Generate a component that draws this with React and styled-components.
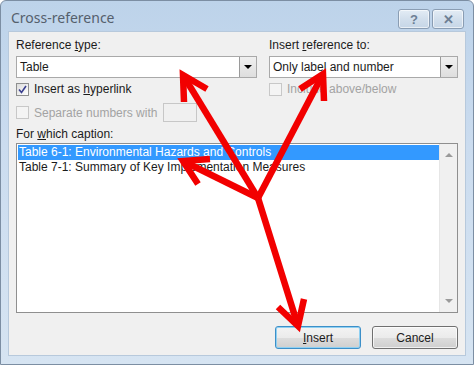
import React from 'react';
import styled, { createGlobalStyle } from 'styled-components';

const Global = createGlobalStyle`
    body { margin: 0; background: #ffffff; }
`

const Frame = styled.div`
    width: 474px; height: 365px;
    box-sizing: border-box;
    position: relative;
    display: flex;
    flex-direction: column;

    background: linear-gradient(180deg, #bdd3ea 0%, #cbdcef 40%, #d6e4f2 100%);
    border: 1px solid #7c8ea3;
    border-radius: 6px 6px 0 0;
    font-family: "Liberation Sans", Arial, sans-serif;
    font-size: 12px;
    color: #1b1b1b;
`

const TitleBar = styled.div`
    height: 30px;
    display: flex;
    align-items: center;
    justify-content: space-between;
    padding: 0 9px 0 10px;
`

const Title = styled.div`
    font-family: "Noto Sans", "Liberation Sans", sans-serif;
    font-size: 14px;
    color: #55606d;
    margin-top: 2px;
`

const TitleButtons = styled.div`
    display: flex;
    gap: 2px;
    align-self: flex-start;
    margin-top: 8px;
`

const CaptionButton = styled.div`
    width: 32px; height: 20px;
    box-sizing: border-box;
    display: flex;
    align-items: center;
    justify-content: center;
    border: 1px solid #8a9db3;
    border-radius: 3px;
    background: linear-gradient(180deg, #e3ecf5 0%, #d2dfec 50%, #c6d6e7 100%);
    box-shadow: inset 0 0 0 1px rgba(255,255,255,0.6);
    color: #6d7f94;
    font-weight: bold;
    font-size: 13px;
`

const Client = styled.div`
    flex: 1;
    margin: 0 7px 8px;
    padding: 6px 7px 6px 7px;
    background: #f0f0f0;
    border: 1px solid #b7c9dc;
    display: flex;
    flex-direction: column;
`

const TopSection = styled.div`
    display: flex;
    gap: 12px;
`

const Column = styled.div`
    width: ${(p) => p.width}px;
    display: flex;
    flex-direction: column;
`

const Label = styled.div`
    line-height: 14px;
    height: 14px;
    margin-top: ${(p) => p.mt || 0}px;
`

const Combo = styled.div`
    margin-top: 4px;
    height: 22px;
    box-sizing: border-box;
    display: flex;
    align-items: center;
    background: #ffffff;
    border: 1px solid #a9a9a9;
    padding-left: 1px;
`

const ComboText = styled.div`
    flex: 1;
    padding-left: 2px;
    line-height: 14px;
`

const ComboButton = styled.div`
    width: 17px; height: 20px;
    box-sizing: border-box;
    display: flex;
    align-items: center;
    justify-content: center;
    background: linear-gradient(180deg, #f0f0f0 0%, #dedede 100%);
    border-left: 1px solid #9a9a9a;
`

const DownTri = styled.div`
    width: 0; height: 0;
    border-left: 4px solid transparent;
    border-right: 4px solid transparent;
    border-top: 4px solid #000000;
`

const CheckRow = styled.div`
    display: flex;
    align-items: center;
    gap: 5px;
    margin-top: ${(p) => p.mt}px;
    height: ${(p) => p.h}px;
    color: ${(p) => (p.disabled ? '#a3a3a3' : '#1b1b1b')};
`

const Box = styled.div`
    width: 13px; height: 13px;
    box-sizing: border-box;
    border: 1px solid ${(p) => (p.disabled ? '#c8c8c8' : '#8e8f8f')};
    background: ${(p) => (p.disabled ? '#f4f4f4' : 'linear-gradient(135deg, #dcdcdc, #ffffff)')};
    display: flex;
    align-items: center;
    justify-content: center;
`

const SmallInput = styled.div`
    width: 34px; height: 19px;
    box-sizing: border-box;
    margin-left: 1px;
    border: 1px solid #c7c7c7;
    background: #f0f0f0;
`

const ListBox = styled.div`
    margin-top: 2px;
    height: 170px;
    box-sizing: border-box;
    border: 1px solid #8f8f8f;
    background: #ffffff;
    display: flex;
`

const Items = styled.div`
    flex: 1;
    padding: 1px 0 0 1px;
`

const Item = styled.div`
    height: 15px;
    line-height: 15px;
    padding-left: 1px;
    background: ${(p) => (p.selected ? '#3399ff' : 'transparent')};
    color: ${(p) => (p.selected ? '#ffffff' : '#1b1b1b')};
`

const ScrollBar = styled.div`
    width: 17px;
    background: #f0f0f0;
    border-left: 1px solid #e6e6e6;
    display: flex;
    flex-direction: column;
    justify-content: space-between;
    align-items: center;
    padding: 9px 0 9px;
`

const Tri = styled.div`
    width: 0; height: 0;
    border-left: 4px solid transparent;
    border-right: 4px solid transparent;
    ${(p) => (p.up ? 'border-bottom: 4px solid #9a9a9a;' : 'border-top: 4px solid #9a9a9a;')}
`

const ButtonRow = styled.div`
    margin-top: 13px;
    display: flex;
    justify-content: flex-end;
    gap: 11px;
`

const Button = styled.div`
    width: 86px; height: 23px;
    box-sizing: border-box;
    display: flex;
    align-items: center;
    justify-content: center;
    border: 1px solid ${(p) => (p.focused ? '#3c8fc8' : '#707070')};
    border-radius: 3px;
    background: linear-gradient(180deg, #f3f3f3 0%, #ebebeb 50%, #dddddd 51%, #cfcfcf 100%);
    box-shadow: inset 0 0 0 1px ${(p) => (p.focused ? '#8fd0f2' : 'rgba(255,255,255,0.7)')};
`

const Arrows = styled.svg`
    position: absolute;
    top: 0; left: 0;
    pointer-events: none;
`

const RED = '#f20000'

const Arrow = ({ from, tip, wings }) => (
    <g stroke={RED} strokeWidth="6.5" fill="none" strokeLinejoin="miter">
        <line x1={from[0]} y1={from[1]} x2={tip[0]} y2={tip[1]} />
        <polyline points={`${wings[0][0]},${wings[0][1]} ${tip[0]},${tip[1]} ${wings[1][0]},${wings[1][1]}`} />
    </g>
)

const Check = () => (
    <svg width="9" height="9" viewBox="0 0 9 9">
        <path d="M1 4.5 L3.5 7.5 L8 1" stroke="#3a3f8f" strokeWidth="1.6" fill="none" />
    </svg>
)

const App = () => {
    const origin = [257, 197]
    return (
        <>
            <Global />
            <Frame>
                <TitleBar>
                    <Title>Cross-reference</Title>
                    <TitleButtons>
                        <CaptionButton>?</CaptionButton>
                        <CaptionButton>✕</CaptionButton>
                    </TitleButtons>
                </TitleBar>
                <Client>
                    <TopSection>
                        <Column width={241}>
                            <Label>Reference <u>t</u>ype:</Label>
                            <Combo>
                                <ComboText>Table</ComboText>
                                <ComboButton><DownTri /></ComboButton>
                            </Combo>
                            <CheckRow mt={4} h={14}>
                                <Box><Check /></Box>
                                <span>Insert as <u>h</u>yperlink</span>
                            </CheckRow>
                            <CheckRow mt={7} h={19} disabled>
                                <Box disabled />
                                <span>Separate numbers with</span>
                                <SmallInput />
                            </CheckRow>
                        </Column>
                        <Column width={189}>
                            <Label>Insert <u>r</u>eference to:</Label>
                            <Combo>
                                <ComboText>Only label and number</ComboText>
                                <ComboButton><DownTri /></ComboButton>
                            </Combo>
                            <CheckRow mt={4} h={14} disabled>
                                <Box disabled />
                                <span>Include above/below</span>
                            </CheckRow>
                        </Column>
                    </TopSection>
                    <Label mt={5}>For <u>w</u>hich caption:</Label>
                    <ListBox>
                        <Items>
                            <Item selected>Table 6-1: Environmental Hazards and Controls</Item>
                            <Item>Table 7-1: Summary of Key Implementation Measures</Item>
                        </Items>
                        <ScrollBar>
                            <Tri up />
                            <Tri />
                        </ScrollBar>
                    </ListBox>
                    <ButtonRow>
                        <Button focused><span><u>I</u>nsert</span></Button>
                        <Button>Cancel</Button>
                    </ButtonRow>
                </Client>
                <Arrows width="474" height="365" viewBox="0 0 474 365">
                    <Arrow from={origin} tip={[182, 74]} wings={[[183, 101], [206, 88]]} />
                    <Arrow from={origin} tip={[322, 73]} wings={[[299, 88], [323, 100]]} />
                    <Arrow from={origin} tip={[182, 160]} wings={[[197, 183], [209, 158]]} />
                    <Arrow from={origin} tip={[297, 325]} wings={[[303, 298], [277, 306]]} />
                </Arrows>
            </Frame>
        </>
    )
}

export default App;
